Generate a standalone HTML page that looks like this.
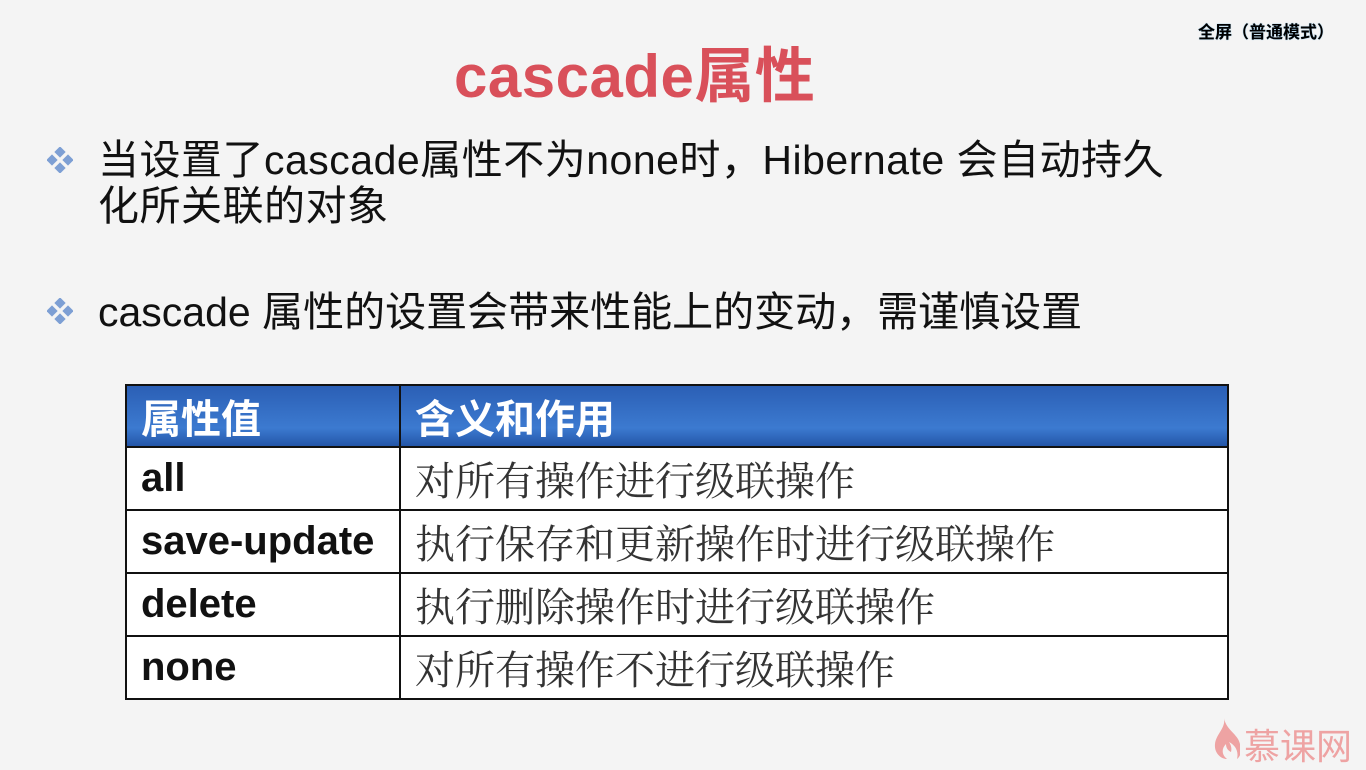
<!DOCTYPE html>
<html><head><meta charset="utf-8"><style>
body{margin:0;width:1366px;height:768px;background:#f4f4f4;position:relative;overflow:hidden;font-family:"Liberation Sans","Noto Sans CJK SC",sans-serif;}
.t{position:absolute;white-space:nowrap}
.title{left:454px;top:28px;font-size:60px;font-weight:bold;color:#d9505a;letter-spacing:0.5px}
.b{font-size:41px;color:#111;left:98px;line-height:46px}
.dia{position:absolute;width:26px;height:26px}
table{position:absolute;left:125px;top:384px;width:1104px;border-collapse:collapse;}
td{border:2px solid #111;height:61px;padding:0 14px;font-size:40px;background:#fff}
td.k{font-weight:bold;width:244px;color:#111}
td.v{color:#333;font-family:"Noto Serif CJK SC",serif;font-size:40px}
tr.h td{background:linear-gradient(#2b5fb5,#3c7ad0 70%,#2456a8);color:#fff;font-weight:bold;height:60px;border-color:#111;font-size:40px}
</style></head><body>
<div class="t" style="left:1198px;top:18px;font-size:17px;font-weight:bold;color:#000;text-shadow:0 0 1px #5ad">全屏（普通模式）</div>
<div class="t title">cascade属性</div>
<svg class="dia" style="left:47px;top:147px" viewBox="0 0 26 26"><g fill="#7d9fd4"><rect x="9" y="1" width="8" height="8" transform="rotate(45 13 5)"/><rect x="9" y="17" width="8" height="8" transform="rotate(45 13 21)"/><rect x="1" y="9" width="8" height="8" transform="rotate(45 5 13)"/><rect x="17" y="9" width="8" height="8" transform="rotate(45 21 13)"/></g></svg>
<svg class="dia" style="left:47px;top:298px" viewBox="0 0 26 26"><g fill="#7d9fd4"><rect x="9" y="1" width="8" height="8" transform="rotate(45 13 5)"/><rect x="9" y="17" width="8" height="8" transform="rotate(45 13 21)"/><rect x="1" y="9" width="8" height="8" transform="rotate(45 5 13)"/><rect x="17" y="9" width="8" height="8" transform="rotate(45 21 13)"/></g></svg>
<div class="t b" style="top:137px;letter-spacing:0.5px">当设置了cascade属性不为none时，Hibernate 会自动持久<br>化所关联的对象</div>
<div class="t b" style="top:289px">cascade 属性的设置会带来性能上的变动，需谨慎设置</div>
<table>
<tr class="h"><td class="k">属性值</td><td>含义和作用</td></tr>
<tr><td class="k">all</td><td class="v">对所有操作进行级联操作</td></tr>
<tr><td class="k">save-update</td><td class="v">执行保存和更新操作时进行级联操作</td></tr>
<tr><td class="k">delete</td><td class="v">执行删除操作时进行级联操作</td></tr>
<tr><td class="k">none</td><td class="v">对所有操作不进行级联操作</td></tr>
</table>
<svg style="position:absolute;left:1212px;top:716px" width="28" height="44" viewBox="0 0 28 44"><path d="M12 2C14 12 4 18 3 28c-1 9 6 15 12 15-5-4-6-10-1-15 0 5 3 7 5 8 1-4 0-7-2-10 6 3 10 9 8 17 4-3 5-9 3-15C26 18 14 14 12 2z" fill="#eea3a3"/></svg>
<div class="t" style="left:1244px;top:718px;font-size:36px;color:#eea3a3">慕课网</div>
</body></html>
